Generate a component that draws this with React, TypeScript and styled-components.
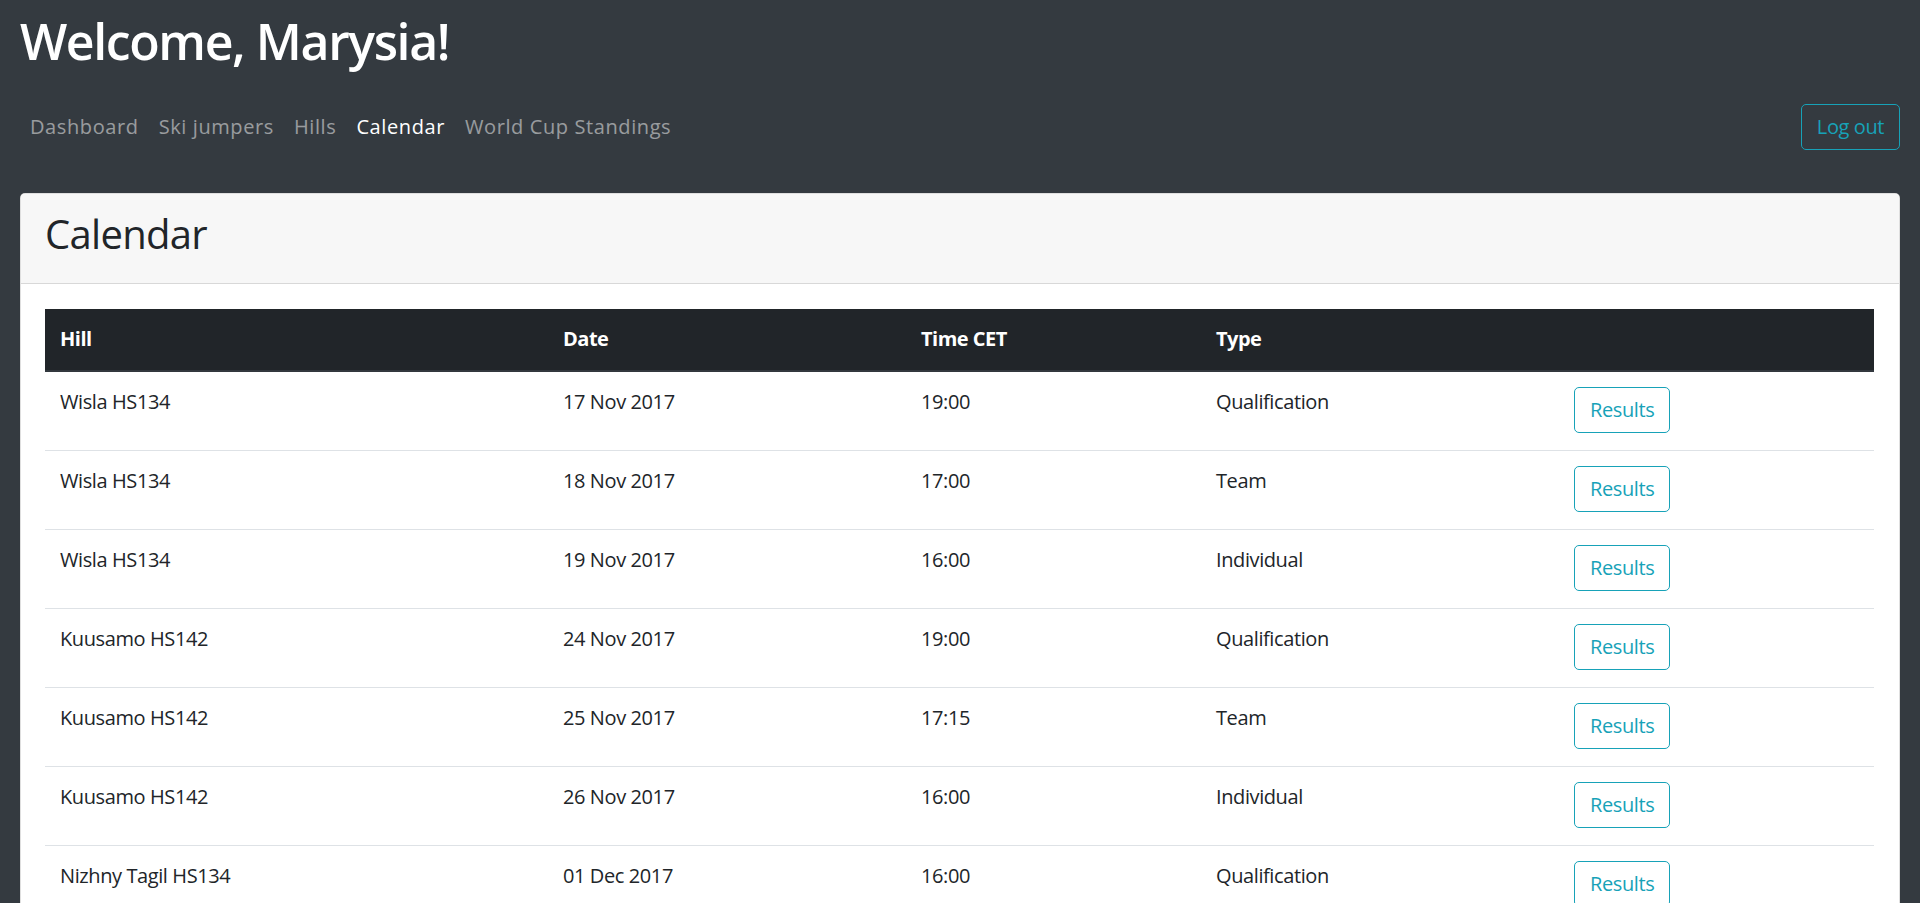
import React from "react";
import styled, { createGlobalStyle } from "styled-components";

const GlobalStyle = createGlobalStyle`
  html, body { margin: 0; padding: 0; }
  body {
    background: #343a40;
    font-family: "Open Sans", "Noto Sans", sans-serif;
    font-size: 20px;
    line-height: 1.5;
    color: #212529;
  }
  * { box-sizing: border-box; }
`;

const Header = styled.header`
  padding: 11px 20px 0;
`;

const Title = styled.h1`
  margin: 0;
  font-size: 50px;
  line-height: 60px;
  font-weight: 600;
  color: #fff;
  letter-spacing: -1.4px;
`;

const NavRow = styled.div`
  margin-top: 33px;
  display: flex;
  align-items: center;
  justify-content: space-between;
`;

const NavList = styled.nav`
  display: flex;
  align-items: center;
`;

const NavLink = styled.a<{ $active?: boolean }>`
  padding: 8px 10px;
  font-size: 20px;
  line-height: 30px;
  color: ${(p) => (p.$active ? "#fff" : "rgba(255,255,255,0.5)")};
  text-decoration: none;
  cursor: pointer;
  letter-spacing: 0.6px;
`;

const OutlineButton = styled.button`
  font-family: inherit;
  font-size: 20px;
  line-height: 30px;
  padding: 7px 15px;
  border: 1px solid #17a2b8;
  border-radius: 5px;
  background: transparent;
  color: #17a2b8;
  cursor: pointer;
  letter-spacing: -0.4px;
`;

const Main = styled.main`
  padding: 43px 20px 20px;
`;

const Card = styled.section`
  background: #fff;
  border: 1px solid rgba(0, 0, 0, 0.125);
  border-radius: 5px;
  overflow: hidden;
`;

const CardHeader = styled.div`
  background: #f7f7f7;
  border-bottom: 1px solid rgba(0, 0, 0, 0.125);
  padding: 16px 25px 25px 24px;
`;

const CardTitle = styled.h2`
  margin: 0;
  font-size: 40px;
  line-height: 48px;
  font-weight: 500;
  color: #212529;
  letter-spacing: -0.7px;
`;

const CardBody = styled.div`
  padding: 25px 25px 25px 24px;
`;

const Table = styled.table`
  width: 100%;
  border-collapse: collapse;
  table-layout: fixed;
  color: #212529;
`;

const HeadCell = styled.th<{ $w?: number }>`
  width: ${(p) => (p.$w ? `${p.$w}px` : "auto")};
  background: #212529;
  color: #fff;
  text-align: left;
  font-weight: 700;
  font-size: 20px;
  line-height: 30px;
  padding: 15px 15px 16px;
  border-bottom: 2px solid #32383e;
  letter-spacing: -0.5px;
`;

const Cell = styled.td`
  vertical-align: top;
  padding: 15px 15px 17px;
  border-top: 1px solid #dee2e6;
  font-size: 20px;
  line-height: 30px;
  letter-spacing: -0.4px;
`;

const rows = [
  ["Wisla HS134", "17 Nov 2017", "19:00", "Qualification"],
  ["Wisla HS134", "18 Nov 2017", "17:00", "Team"],
  ["Wisla HS134", "19 Nov 2017", "16:00", "Individual"],
  ["Kuusamo HS142", "24 Nov 2017", "19:00", "Qualification"],
  ["Kuusamo HS142", "25 Nov 2017", "17:15", "Team"],
  ["Kuusamo HS142", "26 Nov 2017", "16:00", "Individual"],
  ["Nizhny Tagil HS134", "01 Dec 2017", "16:00", "Qualification"],
];

export default function App() {
  return (
    <>
      <GlobalStyle />
      <Header>
        <Title>Welcome, Marysia!</Title>
        <NavRow>
          <NavList>
            <NavLink>Dashboard</NavLink>
            <NavLink>Ski jumpers</NavLink>
            <NavLink>Hills</NavLink>
            <NavLink $active>Calendar</NavLink>
            <NavLink>World Cup Standings</NavLink>
          </NavList>
          <OutlineButton>Log out</OutlineButton>
        </NavRow>
      </Header>
      <Main>
        <Card>
          <CardHeader>
            <CardTitle>Calendar</CardTitle>
          </CardHeader>
          <CardBody>
            <Table>
              <thead>
                <tr>
                  <HeadCell $w={503}>Hill</HeadCell>
                  <HeadCell $w={358}>Date</HeadCell>
                  <HeadCell $w={295}>Time CET</HeadCell>
                  <HeadCell $w={358}>Type</HeadCell>
                  <HeadCell />
                </tr>
              </thead>
              <tbody>
                {rows.map((r, i) => (
                  <tr key={i}>
                    <Cell>{r[0]}</Cell>
                    <Cell>{r[1]}</Cell>
                    <Cell>{r[2]}</Cell>
                    <Cell>{r[3]}</Cell>
                    <Cell>
                      <OutlineButton>Results</OutlineButton>
                    </Cell>
                  </tr>
                ))}
              </tbody>
            </Table>
          </CardBody>
        </Card>
      </Main>
    </>
  );
}
